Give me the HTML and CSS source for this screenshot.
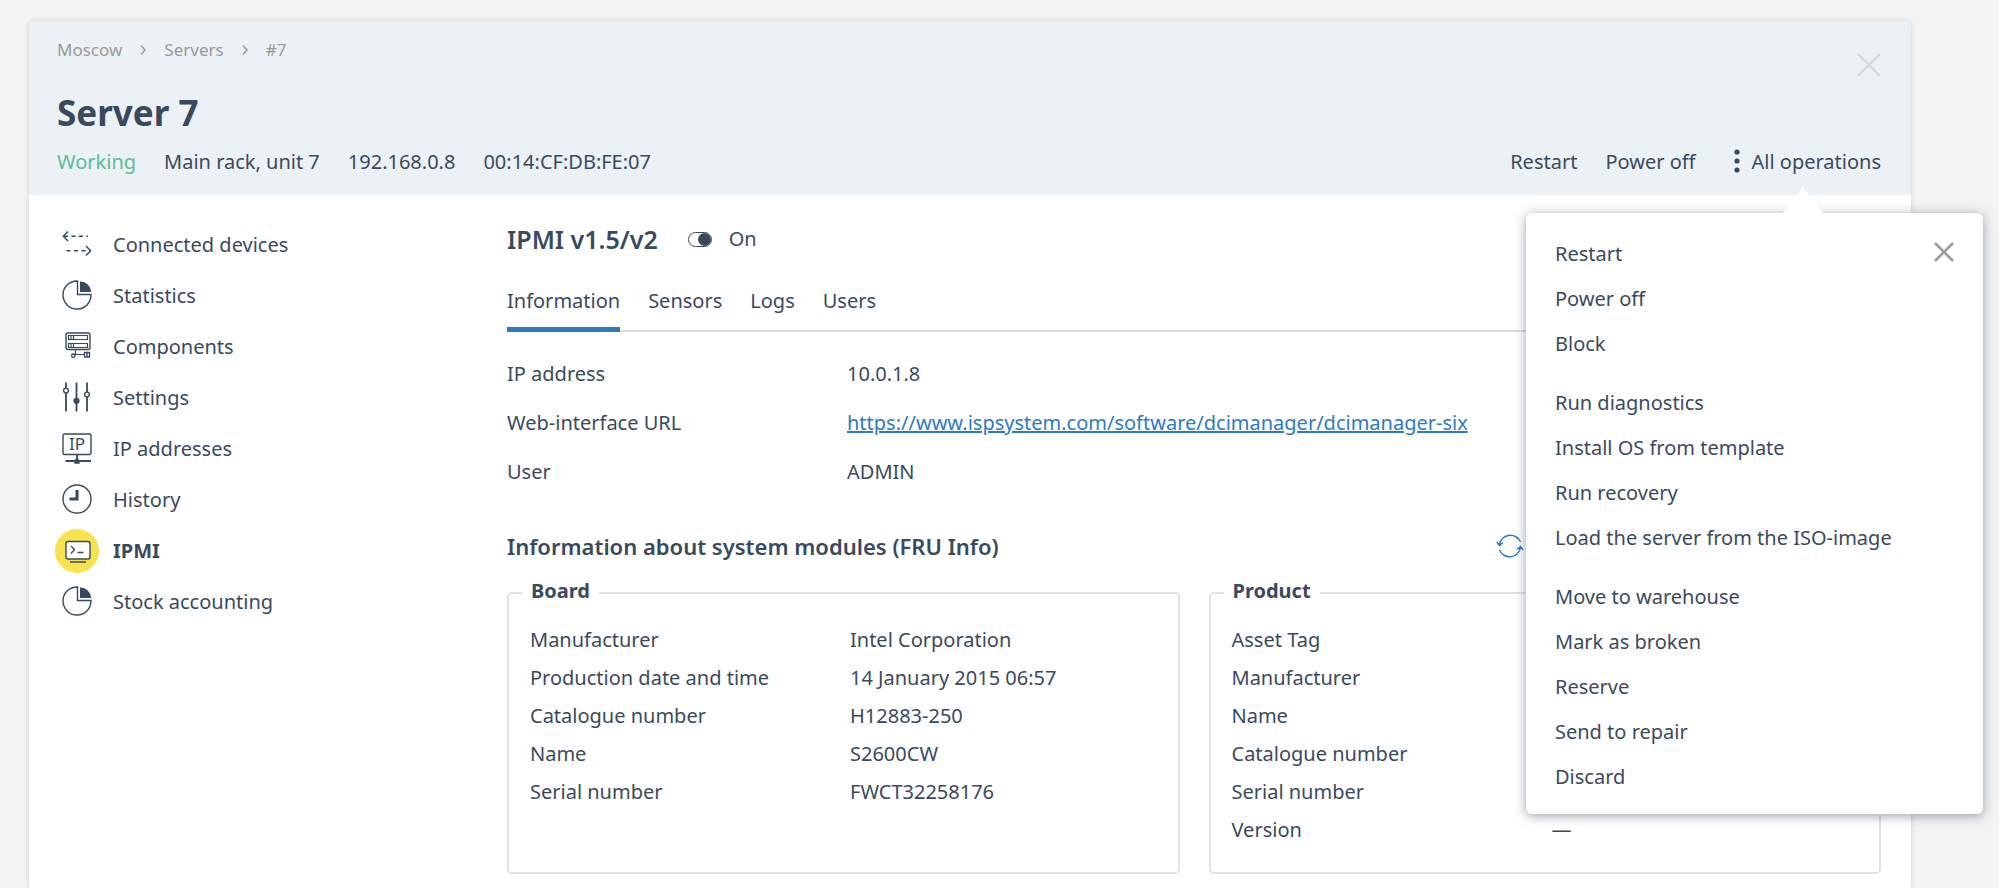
FILE: index.html
```html
<!DOCTYPE html>
<html lang="en">
<head>
  <meta charset="UTF-8">
  <title>Server 7 - IPMI</title>
  <link rel="stylesheet" href="styles.css">
</head>
<body>
  <div class="panel">
    <header class="header">
      <div class="header-top">
        <nav class="breadcrumbs" aria-label="Breadcrumbs">
          <a href="#">Moscow</a>
          <svg class="chevron" viewBox="0 0 6 12"><path d="M1 1.5L5 6L1 10.5"/></svg>
          <a href="#">Servers</a>
          <svg class="chevron" viewBox="0 0 6 12"><path d="M1 1.5L5 6L1 10.5"/></svg>
          <a href="#">#7</a>
        </nav>
        <button class="close" aria-label="Close">
          <svg viewBox="0 0 24 24"><path d="M1 1L23 23M23 1L1 23"/></svg>
        </button>
      </div>
      <h1>Server 7</h1>
      <div class="header-bottom">
        <div class="summary">
          <span class="status">Working</span>
          <span>Main rack, unit 7</span>
          <span>192.168.0.8</span>
          <span>00:14:CF:DB:FE:07</span>
        </div>
        <div class="actions">
          <button>Restart</button>
          <button>Power off</button>
          <div class="all-operations">
            <button class="menu-toggle">
              <svg class="dots" viewBox="0 0 6 28"><circle cx="3" cy="4" r="2.6"/><circle cx="3" cy="13" r="2.6"/><circle cx="3" cy="22" r="2.6"/></svg>
              All operations
            </button>
            <!-- Operations menu -->
            <div class="menu">
              <button class="menu-close" aria-label="Close menu">
                <svg viewBox="0 0 24 24"><path d="M3 3L21 21M21 3L3 21"/></svg>
              </button>
              <ul>
                <li><button>Restart</button></li>
                <li><button>Power off</button></li>
                <li><button>Block</button></li>
              </ul>
              <ul>
                <li><button>Run diagnostics</button></li>
                <li><button>Install OS from template</button></li>
                <li><button>Run recovery</button></li>
                <li><button>Load the server from the ISO-image</button></li>
              </ul>
              <ul>
                <li><button>Move to warehouse</button></li>
                <li><button>Mark as broken</button></li>
                <li><button>Reserve</button></li>
                <li><button>Send to repair</button></li>
                <li><button>Discard</button></li>
              </ul>
            </div>
          </div>
        </div>
      </div>
    </header>

    <div class="content">
      <nav class="sidebar" aria-label="Server sections">
        <a href="#">
          <span class="icon"><svg viewBox="0 0 32 32"><path d="M7 2.500L2.300 7.300L7 12M25 17L29.700 21.700L25 26.500"/><path stroke-dasharray="4 3.500" d="M3 7.300H27M5.500 21.700H29"/></svg></span>
          Connected devices
        </a>
        <a href="#">
          <span class="icon"><svg viewBox="0 0 32 32"><path d="M16.500 1A14 14 0 1 0 30 14.500H16.500Z"/><path class="fill" d="M19.700 2.200V11.300H29.300A10 10 0 0 0 19.700 2.200Z"/></svg></span>
          Statistics
        </a>
        <a href="#">
          <span class="icon"><svg viewBox="0 0 32 32"><rect x="5" y="2" width="24" height="16.500" rx="2"/><path stroke-width="1.200" d="M7.500 4.500H26.500V8.500H7.500ZM7.500 12.500H26.500V16.500H7.500ZM10 4.500V8.500M12.500 4.500V8.500M10 12.500V16.500M12.500 12.500V16.500M14.500 18.500V23.500M13.500 23.500H23"/><circle cx="12.300" cy="24.700" r="1.700"/><path d="M23.500 21.500H28.500V26H23.500ZM26 21.500V26"/></svg></span>
          Components
        </a>
        <a href="#">
          <span class="icon"><svg viewBox="0 0 32 32"><path stroke-width="1.800" d="M5 .5V6M5 11V29.500M15.500 .5V29.500M26 .5V10M26 15V29.500"/><circle cx="5" cy="8.500" r="2.400"/><circle class="fill" cx="15.500" cy="18.800" r="2.400"/><circle cx="26" cy="12.500" r="2.400"/></svg></span>
          Settings
        </a>
        <a href="#">
          <span class="icon"><svg viewBox="0 0 32 32"><rect x="2" y="1" width="28" height="20.500" rx="1.500"/><text x="16" y="17" text-anchor="middle">IP</text><path stroke-width="1.800" d="M16 21.500V28M4.500 28H30"/><path class="fill" d="M14 28L16 25.500L18 28V30H14Z"/></svg></span>
          IP addresses
        </a>
        <a href="#">
          <span class="icon"><svg viewBox="0 0 32 32"><circle cx="16" cy="15" r="14"/><path stroke-width="3" d="M16 6V15H8.500"/></svg></span>
          History
        </a>
        <a href="#" class="active" aria-current="page">
          <span class="icon"><svg viewBox="0 0 32 32"><rect class="screen" x="5" y="6.500" width="24" height="17.500" rx="2"/><path d="M10 11L13.500 14.500L10 18.500M16.500 17.500H22.500M9 27H25"/></svg></span>
          IPMI
        </a>
        <a href="#">
          <span class="icon"><svg viewBox="0 0 32 32"><path d="M16.500 1A14 14 0 1 0 30 14.500H16.500Z"/><path class="fill" d="M19.700 2.200V11.300H29.300A10 10 0 0 0 19.700 2.200Z"/></svg></span>
          Stock accounting
        </a>
      </nav>

      <main class="main">
        <div class="title-row">
          <h2>IPMI v1.5/v2</h2>
          <input type="checkbox" id="ipmiSwitch" class="switch" checked>
          <label for="ipmiSwitch">On</label>
        </div>

        <div class="tabs" role="tablist">
          <button role="tab" aria-selected="true" class="selected">Information</button>
          <button role="tab" aria-selected="false">Sensors</button>
          <button role="tab" aria-selected="false">Logs</button>
          <button role="tab" aria-selected="false">Users</button>
        </div>

        <dl class="info">
          <dt>IP address</dt><dd>10.0.1.8</dd>
          <dt>Web-interface URL</dt><dd><a href="https://www.ispsystem.com/software/dcimanager/dcimanager-six">https://www.ispsystem.com/software/dcimanager/dcimanager-six</a></dd>
          <dt>User</dt><dd>ADMIN</dd>
        </dl>

        <div class="modules-head">
          <h3>Information about system modules (FRU Info)</h3>
          <button class="refresh" aria-label="Refresh">
            <svg viewBox="0 0 28 26"><path d="M3.500 11.500A11 11 0 0 1 24.500 9M24.500 14.500A11 11 0 0 1 3.500 17M.8 9L3.500 12.500L7 9.500M21 16.500L24.500 13.500L27.200 17"/></svg>
          </button>
        </div>

        <div class="modules">
          <fieldset>
            <legend>Board</legend>
            <dl>
              <dt>Manufacturer</dt><dd>Intel Corporation</dd>
              <dt>Production date and time</dt><dd>14 January 2015 06:57</dd>
              <dt>Catalogue number</dt><dd>H12883-250</dd>
              <dt>Name</dt><dd>S2600CW</dd>
              <dt>Serial number</dt><dd>FWCT32258176</dd>
            </dl>
          </fieldset>
          <fieldset>
            <legend>Product</legend>
            <dl>
              <dt>Asset Tag</dt><dd></dd>
              <dt>Manufacturer</dt><dd></dd>
              <dt>Name</dt><dd></dd>
              <dt>Catalogue number</dt><dd></dd>
              <dt>Serial number</dt><dd></dd>
              <dt>Version</dt><dd>—</dd>
            </dl>
          </fieldset>
        </div>
      </main>
    </div>
  </div>
</body>
</html>
```
FILE: styles.css
```css
/* Base */
* { box-sizing: border-box; }
body {
  margin: 0;
  min-height: 100vh;
  display: flex;
  padding: 21px 88px 0 29px;
  background: #f3f3f3;
  font-family: "Noto Sans", sans-serif;
  font-size: 20px;
  line-height: 30px;
  color: #3a4a5e;
  overflow-x: hidden;
}
h1, h2, h3, dl, dd, ul {
  margin: 0;
  padding: 0;
}
button {
  padding: 0;
  border: 0;
  background: none;
  font: inherit;
  color: inherit;
  cursor: pointer;
}
a { color: inherit; text-decoration: none; }
svg { display: block; fill: none; stroke: currentColor; }

.panel {
  flex: 1;
  background: #fff;
  border-radius: 6px 6px 0 0;
  box-shadow: 0 0 5px rgba(0,0,0,0.15);
}

/* Header */
.header {
  background: #ecf1f5;
  border-radius: 6px 6px 0 0;
  padding: 14px 30px 16px 28px;
}
.header-top {
  display: flex;
  justify-content: space-between;
  height: 45px;
}
.breadcrumbs {
  display: flex;
  align-items: center;
  gap: 18px;
  height: 30px;
  font-size: 17px;
  color: #999;
}
.chevron {
  width: 6px;
  height: 12px;
  stroke-width: 1.4;
}
.close {
  align-self: flex-end;
  width: 24px;
  height: 30px;
  color: #d6d6d6;
}
.close path { stroke-width: 2; }
.menu-close path { stroke-width: 2.5; }
h1 {
  font-size: 35px;
  line-height: 65px;
}
.header-bottom {
  display: flex;
  justify-content: space-between;
  height: 34px;
  align-items: center;
}
.summary, .actions {
  display: flex;
  gap: 28px;
}
.status { color: #5dbb98; }
.all-operations {
  position: relative;
  margin-left: 10px;
}
.menu-toggle {
  display: flex;
  align-items: center;
  gap: 12px;
}
.dots {
  width: 6px;
  height: 28px;
  fill: currentColor;
  stroke: none;
}

/* Operations menu */
.menu {
  position: absolute;
  top: 66px;
  right: -102px;
  width: 457px;
  padding: 18px 29px 15px;
  background: #fff;
  border-radius: 6px;
  box-shadow: 0 2px 12px rgba(58,74,94,0.5);
  z-index: 1;
}
.menu::before {
  content: "";
  position: absolute;
  top: -26px;
  right: 159px;
  width: 42px;
  height: 27px;
  background: #fff;
  clip-path: polygon(50% 0, 100% 100%, 0 100%);
}
.menu ul { list-style: none; }
.menu ul + ul { margin-top: 14px; }
.menu li { height: 45px; }
.menu li button {
  width: 100%;
  line-height: 45px;
  text-align: left;
}
.menu-close {
  position: absolute;
  top: 27px;
  right: 27px;
  width: 24px;
  height: 24px;
  color: #999;
}

/* Page body */
.content {
  display: flex;
  padding: 24px 30px 0 26px;
}
.sidebar {
  width: 452px;
  flex-shrink: 0;
}
.sidebar a {
  display: flex;
  align-items: center;
  gap: 14px;
  height: 51px;
}
.icon {
  display: flex;
  align-items: center;
  justify-content: center;
  width: 44px;
  height: 44px;
  border-radius: 50%;
}
.icon svg {
  width: 32px;
  height: 32px;
  stroke-width: 1.4;
}
.icon text {
  font-size: 17px;
  fill: currentColor;
  stroke: none;
}
.icon .fill { fill: currentColor; }
.icon .screen { fill: #fff; }
.active { font-weight: 700; }
.active .icon { background: #f7e34f; }

.main {
  flex: 1;
  min-width: 0;
}
.title-row {
  display: flex;
  align-items: center;
  height: 40px;
}
h2 {
  font-size: 25px;
  font-weight: 600;
  margin-right: 30px;
}
.switch {
  appearance: none;
  width: 24px;
  height: 15px;
  margin: 0 17px 0 0;
  border: 1px solid #3a4a5e;
  border-radius: 8px;
}
.switch::before {
  content: "";
  display: block;
  width: 13px;
  height: 13px;
  border-radius: 50%;
  background: #3a4a5e;
}
.switch:checked::before { margin-left: auto; }

/* Tabs */
.tabs {
  display: flex;
  gap: 28px;
  margin-top: 20px;
  box-shadow: inset 0 -2px #dcdcdc;
}
.tabs button {
  padding: 7px 0 11px;
  border-bottom: 5px solid transparent;
}
.tabs .selected { border-color: #2f7abf; }

.info {
  display: grid;
  grid-template-columns: 340px 1fr;
  line-height: 49px;
  margin-top: 17px;
}
.info a {
  color: #2f7abf;
  text-decoration: underline;
}

/* System modules */
.modules-head {
  display: flex;
  justify-content: space-between;
  align-items: center;
  margin-top: 35px;
}
h3 {
  font-size: 22px;
  font-weight: 600;
}
.refresh {
  margin-right: 357px;
  color: #2f7abf;
}
.refresh svg {
  width: 28px;
  height: 26px;
  stroke-width: 1.5;
}
.modules {
  display: grid;
  grid-template-columns: 1fr 1fr;
  gap: 29px;
  margin-top: 15px;
}
fieldset {
  min-width: 0;
  margin: 0;
  padding: 11px 13px 23px;
  border: 2px solid #e2e2e2;
  border-radius: 5px;
}
legend {
  padding: 0 9px 4px;
  font-weight: 700;
}
fieldset dl {
  display: grid;
  grid-template-columns: 320px 1fr;
  grid-auto-rows: 38px;
  line-height: 38px;
  padding: 0 8px;
}
```
